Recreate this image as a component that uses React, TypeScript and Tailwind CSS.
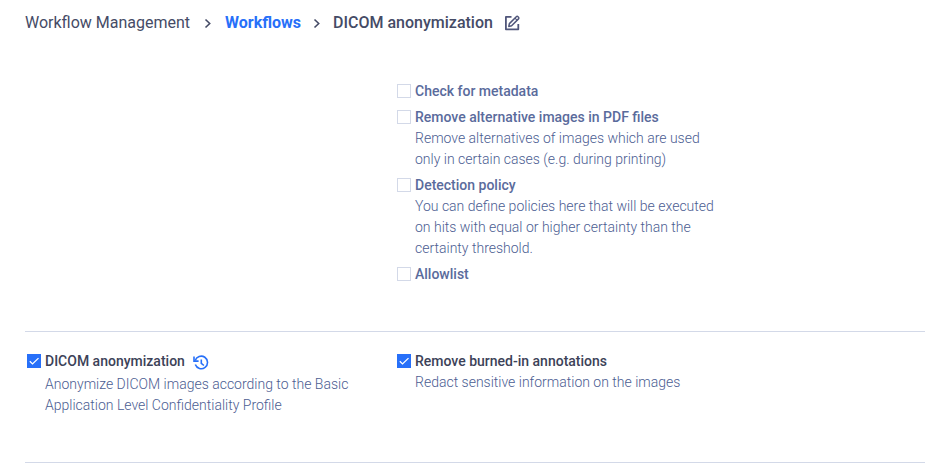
import React from "react";
import type { ReactNode } from "react";

type OptionProps = {
  id: string;
  label: string;
  description?: string;
  defaultChecked?: boolean;
  action?: ReactNode;
};

const Separator = () => (
  <svg
    className="h-3 w-2 shrink-0"
    viewBox="0 0 8 12"
    fill="none"
    stroke="#454b66"
    strokeWidth="1.6"
    aria-hidden="true"
  >
    <path d="M1.5 2.5 5.7 6.5 1.5 10.5" />
  </svg>
);

const EditIcon = () => (
  <svg
    className="h-4 w-4"
    viewBox="0 0 16 16"
    fill="none"
    stroke="#50567a"
    strokeWidth="1.8"
    strokeLinejoin="round"
    aria-hidden="true"
  >
    <path d="M7.5 1.9H1.9v12.4h12.4V9" />
    <path d="M4.8 11.4 5.4 8.6 12.3 1.7a1.2 1.2 0 0 1 1.7 0l.5.5a1.2 1.2 0 0 1 0 1.7L7.6 10.8Z" strokeWidth="1.5" />
    <path d="m11 3.2 2.2 2.2" strokeWidth="1.2" />
  </svg>
);

const HistoryIcon = () => (
  <svg
    className="h-4 w-4"
    viewBox="0 0 16 16"
    fill="none"
    stroke="#2770f9"
    strokeWidth="1.6"
    aria-hidden="true"
  >
    <path d="M2.2 5.6A6.3 6.3 0 1 1 2.3 9.6" />
    <path d="M1 1.6v4.5h4.6" />
    <path d="M8.3 4.6v3.7l2.6 2.2" />
  </svg>
);

const Option = ({ id, label, description, defaultChecked, action }: OptionProps) => (
  <div className="flex gap-1 pl-0.5">
    <div className="grid h-5 w-3.5 shrink-0 place-items-center">
      <input
        id={id}
        type="checkbox"
        defaultChecked={defaultChecked}
        className="peer col-start-1 row-start-1 h-3.5 w-3.5 appearance-none border border-[#d3d9e8] bg-white checked:border-[#2770f9] checked:bg-[#2770f9]"
      />
      <svg
        className="pointer-events-none col-start-1 row-start-1 hidden h-3.5 w-3.5 peer-checked:block"
        viewBox="0 0 14 14"
        fill="none"
        stroke="white"
        strokeWidth="1.3"
        aria-hidden="true"
      >
        <path d="m2.8 7.3 2.7 2.6 6-5.8" />
      </svg>
    </div>
    <div className="text-sm leading-[21px] text-[#4c5d92]">
      <div className="flex items-start gap-2">
        <label
          htmlFor={id}
          className={
            defaultChecked
              ? "font-medium text-[#3c4258]"
              : "font-medium text-[#5a6b9c]"
          }
        >
          {label}
        </label>
        {action}
      </div>
      {description && <p className="max-w-[306px] font-light">{description}</p>}
    </div>
  </div>
);

const App = () => {
  return (
    <main className="bg-white pr-[27px] pl-[25px] font-['Roboto',sans-serif]">
      <nav
        aria-label="Breadcrumb"
        className="flex h-[46px] items-center text-base leading-6 text-[#454b66]"
      >
        <a href="#management">Workflow Management</a>
        <span className="flex w-[35px] justify-center">
          <Separator />
        </span>
        <a href="#workflows" className="font-bold text-[#2770f9]">
          Workflows
        </a>
        <span className="flex w-8 justify-center">
          <Separator />
        </span>
        <span className="font-medium">DICOM anonymization</span>
        <button type="button" aria-label="Edit name" className="ml-[11px]">
          <EditIcon />
        </button>
      </nav>

      <section className="grid grid-cols-[37fr_53fr] border-b border-[#d3d9e8] pt-[35px] pb-[46px]">
        <div className="col-start-2 flex flex-col gap-[5px]">
          <Option id="metadata" label="Check for metadata" />
          <Option
            id="alternatives"
            label="Remove alternative images in PDF files"
            description="Remove alternatives of images which are used only in certain cases (e.g. during printing)"
          />
          <Option
            id="detection"
            label="Detection policy"
            description="You can define policies here that will be executed on hits with equal or higher certainty than the certainty threshold."
          />
          <Option id="allowlist" label="Allowlist" />
        </div>
      </section>

      <section className="grid grid-cols-[37fr_53fr] border-b border-[#d3d9e8] pt-[19px] pb-[46px]">
        <Option
          id="dicom"
          label="DICOM anonymization"
          description="Anonymize DICOM images according to the Basic Application Level Confidentiality Profile"
          defaultChecked
          action={
            <button type="button" aria-label="Restore defaults" className="pt-1 pb-[3px]">
              <HistoryIcon />
            </button>
          }
        />
        <Option
          id="annotations"
          label="Remove burned-in annotations"
          description="Redact sensitive information on the images"
          defaultChecked
        />
      </section>
    </main>
  );
};

export default App;
